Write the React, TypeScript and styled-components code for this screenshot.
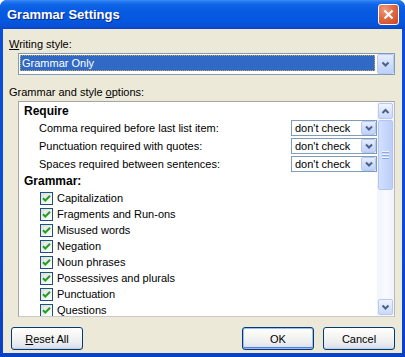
import React from "react";
import styled, { createGlobalStyle } from "styled-components";

const Global = createGlobalStyle`
  html, body { margin: 0; padding: 0; background: #ffffff; }
  body { font-family: "Liberation Sans", Arial, sans-serif; font-size: 11px; color: #000; }
`;

const Window = styled.div`
  width: 405px;
  height: 357px;
  display: flex;
  flex-direction: column;
  border-radius: 7px 7px 0 0;
  background: linear-gradient(180deg, #0A4FD8 0%, #0A4CD6 60%, #0840C6 100%);
  overflow: hidden;
`;

const TitleBar = styled.div`
  height: 29px;
  flex: none;
  display: flex;
  align-items: center;
  padding: 0 6px 0 7px;
  background: linear-gradient(
    180deg,
    #3D8BF7 0%,
    #2074EE 7%,
    #0D62E5 18%,
    #0659E1 45%,
    #0557DE 75%,
    #0A4FD4 92%,
    #0843C6 100%
  );
`;

const Title = styled.div`
  flex: 1;
  color: #ffffff;
  font-family: "Liberation Sans", Arial, sans-serif;
  font-weight: bold;
  font-size: 13px;
  line-height: 16px;
  padding-top: 1px;
  text-shadow: 1px 1px 0 #0B2A8E;
`;

const CloseBtn = styled.div`
  width: 19px;
  height: 19px;
  margin-top: -1px;
  border: 1px solid #ffffff;
  border-radius: 3px;
  background: radial-gradient(circle at 30% 25%, #EE9A7E 0%, #E06A45 45%, #C94420 100%);
  display: flex;
  align-items: center;
  justify-content: center;
`;

const Client = styled.div`
  flex: 1;
  margin: 0 3px 4px 3px;
  background: #ECE9D8;
  display: flex;
  flex-direction: column;
  padding: 9px 7px 0 0;
`;

const Label = styled.div`
  height: 13px;
  line-height: 13px;
  padding-left: 6px;
  margin-top: ${(p: { $mt?: number }) => p.$mt ?? 0}px;
  white-space: nowrap;
`;

const U = styled.span`
  text-decoration: underline;
`;

const BigCombo = styled.div`
  margin: 2px 0 0 15px;
  width: 377px;
  height: 22px;
  box-sizing: border-box;
  border: 1px solid #7F9DB9;
  background: #ffffff;
  display: flex;
  align-items: flex-start;
`;

const Selected = styled.div`
  flex: 1;
  margin: 1px 1px 0 1px;
  height: 16px;
  box-sizing: border-box;
  background: #316AC5;
  color: #ffffff;
  outline: 1px dotted #C9A24E;
  outline-offset: -1px;
  padding-left: 2px;
  line-height: 16px;
`;

const DropBtn = styled.div<{ $w: number; $h: number }>`
  width: ${(p) => p.$w}px;
  height: ${(p) => p.$h}px;
  box-sizing: border-box;
  margin: ${(p) => (p.$h > 16 ? "0 0 0 1px" : "0")};
  border: 1px solid #B6C8F3;
  border-radius: 2px;
  background: linear-gradient(180deg, #E6EEFD 0%, #D2DFFC 45%, #BFD1FA 100%);
  display: flex;
  align-items: center;
  justify-content: center;
  flex: none;
`;

const ListBox = styled.div`
  margin: 2px 0 0 15px;
  width: 377px;
  height: 216px;
  box-sizing: border-box;
  border: 1px solid #A5A5A5;
  border-right-color: #B9B9B9;
  border-bottom-color: #C9C9C9;
  background: #ffffff;
  display: flex;
  overflow: hidden;
`;

const ListContent = styled.div`
  flex: 1;
  padding-top: 1px;
  overflow: hidden;
  display: flex;
  flex-direction: column;
`;

const Heading = styled.div<{ $h: number }>`
  height: ${(p) => p.$h}px;
  line-height: ${(p) => p.$h}px;
  padding-left: 5px;
  font-weight: bold;
  font-size: 12px;
  flex: none;
`;

const OptionRow = styled.div`
  height: 18px;
  flex: none;
  display: flex;
  align-items: center;
  padding-left: 20px;
  line-height: 18px;
`;

const OptionText = styled.div`
  flex: 1;
  white-space: nowrap;
`;

const SmallCombo = styled.div`
  width: 86px;
  height: 16px;
  box-sizing: border-box;
  border: 1px solid #7F9DB9;
  background: #ffffff;
  display: flex;
  align-items: center;
  padding: 0 0 0 3px;
`;

const ComboText = styled.div`
  flex: 1;
  line-height: 14px;
  white-space: nowrap;
`;

const CheckRow = styled.div`
  height: 16px;
  flex: none;
  display: flex;
  align-items: flex-start;
  padding-left: 21px;
  line-height: 16px;
`;

const CheckBox = styled.div`
  width: 13px;
  height: 13px;
  margin-top: 2px;
  box-sizing: border-box;
  border: 1px solid #1C5180;
  background: linear-gradient(135deg, #DCDCD7 0%, #F2F2EF 60%, #FFFFFF 100%);
  display: flex;
  align-items: center;
  justify-content: center;
  flex: none;
`;

const CheckLabel = styled.div`
  margin-left: 4px;
  white-space: nowrap;
`;

const ScrollBar = styled.div`
  width: 17px;
  flex: none;
  background: linear-gradient(90deg, #F1F4FC 0%, #F8FAFE 50%, #F1F4FC 100%);
  display: flex;
  flex-direction: column;
`;

const ScrollBtn = styled.div<{ $bottom?: boolean }>`
  height: 16px;
  margin: ${(p) => (p.$bottom ? "0 1px 1px 1px" : "1px 1px 0 1px")};
  box-sizing: border-box;
  border: 1px solid #B7C9F3;
  border-radius: 2px;
  background: linear-gradient(180deg, #F0F5FE 0%, #DCE6FD 50%, #C9D8FB 100%);
  display: flex;
  align-items: center;
  justify-content: center;
  flex: none;
`;

const Thumb = styled.div`
  height: 70px;
  margin: 1px 1px 0 1px;
  box-sizing: border-box;
  border: 1px solid #B3C6F2;
  border-radius: 2px;
  background: linear-gradient(90deg, #D3E0FD 0%, #C7D7FC 50%, #BCCEF8 100%);
  display: flex;
  flex-direction: column;
  align-items: center;
  justify-content: center;
  gap: 1px;
  flex: none;
`;

const Grip = styled.div`
  width: 7px;
  height: 1px;
  background: #EEF4FE;
  box-shadow: 0 1px 0 #8CA8E6;
  margin-bottom: 1px;
`;

const Track = styled.div`
  flex: 1;
`;

const ButtonRow = styled.div`
  margin-top: 10px;
  padding-left: 8px;
  display: flex;
  gap: 9px;
`;

const Btn = styled.div<{ $default?: boolean; $push?: boolean }>`
  width: 72px;
  height: 23px;
  box-sizing: border-box;
  margin-left: ${(p) => (p.$push ? "auto" : "0")};
  border: 1px solid #003C74;
  border-radius: 3px;
  background: linear-gradient(180deg, #FFFFFF 0%, #F6F6F3 35%, #ECEDEF 70%, #D5DDEB 100%);
  box-shadow: ${(p) =>
    p.$default
      ? "inset 0 0 0 1px #9DBCF6, inset 0 -2px 0 #4C7FE0, inset 1px 0 0 #8EB0F5, inset -1px 0 0 #8EB0F5"
      : "inset 0 -1px 0 #C2CEE4"};
  display: flex;
  align-items: center;
  justify-content: center;
  line-height: 14px;
`;

const Chevron = ({ up = false, small = false }: { up?: boolean; small?: boolean }) => (
  <svg width={small ? 8 : 9} height={6} viewBox="0 0 8 6">
    <path
      d={up ? "M1 5 L4 2 L7 5" : "M1 1.5 L4 4.5 L7 1.5"}
      fill="none"
      stroke="#4D6185"
      strokeWidth={2}
    />
  </svg>
);

const Check = () => (
  <svg width="9" height="9" viewBox="0 0 9 9">
    <path d="M1 4.2 L3.3 6.5 L8 1.8" fill="none" stroke="#21A121" strokeWidth={2} />
  </svg>
);

const requireOptions = [
  "Comma required before last list item:",
  "Punctuation required with quotes:",
  "Spaces required between sentences:",
];

const grammarOptions = [
  "Capitalization",
  "Fragments and Run-ons",
  "Misused words",
  "Negation",
  "Noun phrases",
  "Possessives and plurals",
  "Punctuation",
  "Questions",
];

export default function App() {
  return (
    <>
      <Global />
      <Window>
        <TitleBar>
          <Title>Grammar Settings</Title>
          <CloseBtn>
            <svg width="11" height="11" viewBox="0 0 11 11">
              <path d="M1.5 1.5 L9.5 9.5 M9.5 1.5 L1.5 9.5" stroke="#ffffff" strokeWidth={2.2} />
            </svg>
          </CloseBtn>
        </TitleBar>
        <Client>
          <Label>
            <U>W</U>riting style:
          </Label>
          <BigCombo>
            <Selected>Grammar Only</Selected>
            <DropBtn $w={17} $h={20}>
              <Chevron />
            </DropBtn>
          </BigCombo>
          <Label $mt={11}>
            Grammar and style <U>o</U>ptions:
          </Label>
          <ListBox>
            <ListContent>
              <Heading $h={16}>Require</Heading>
              {requireOptions.map((t) => (
                <OptionRow key={t}>
                  <OptionText>{t}</OptionText>
                  <SmallCombo>
                    <ComboText>don't check</ComboText>
                    <DropBtn $w={15} $h={14}>
                      <Chevron small />
                    </DropBtn>
                  </SmallCombo>
                </OptionRow>
              ))}
              <Heading $h={17}>Grammar:</Heading>
              {grammarOptions.map((t) => (
                <CheckRow key={t}>
                  <CheckBox>
                    <Check />
                  </CheckBox>
                  <CheckLabel>{t}</CheckLabel>
                </CheckRow>
              ))}
            </ListContent>
            <ScrollBar>
              <ScrollBtn>
                <Chevron up />
              </ScrollBtn>
              <Thumb>
                <Grip />
                <Grip />
                <Grip />
              </Thumb>
              <Track />
              <ScrollBtn $bottom>
                <Chevron />
              </ScrollBtn>
            </ScrollBar>
          </ListBox>
          <ButtonRow>
            <Btn>
              <span>
                <U>R</U>eset All
              </span>
            </Btn>
            <Btn $default $push>
              OK
            </Btn>
            <Btn>Cancel</Btn>
          </ButtonRow>
        </Client>
      </Window>
    </>
  );
}
